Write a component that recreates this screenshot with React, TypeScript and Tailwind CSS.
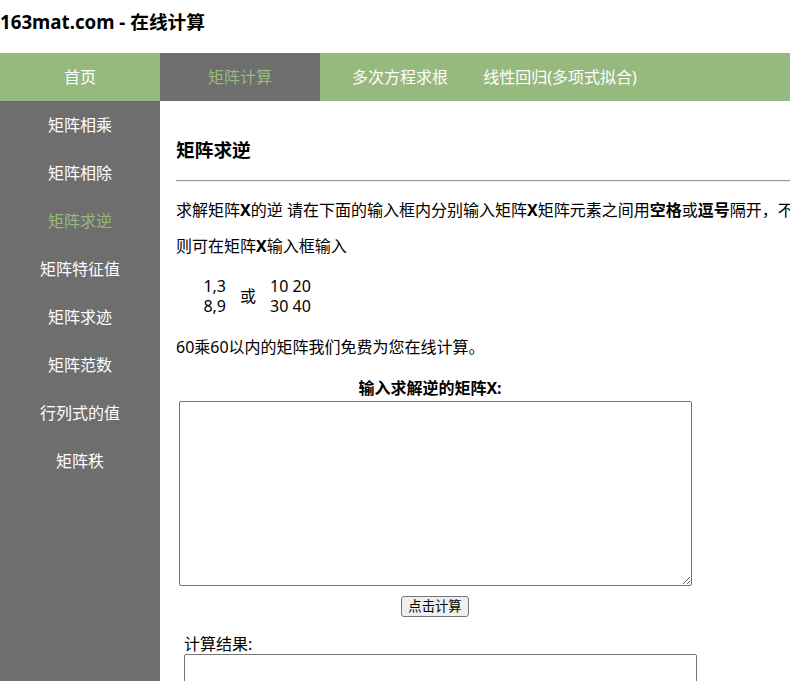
const topNav = [
  { label: '首页', active: false },
  { label: '矩阵计算', active: true },
  { label: '多次方程求根', active: false },
  { label: '线性回归(多项式拟合)', active: false },
];

const sideNav = [
  { label: '矩阵相乘', active: false },
  { label: '矩阵相除', active: false },
  { label: '矩阵求逆', active: true },
  { label: '矩阵特征值', active: false },
  { label: '矩阵求迹', active: false },
  { label: '矩阵范数', active: false },
  { label: '行列式的值', active: false },
  { label: '矩阵秩', active: false },
];

export default function App() {
  return (
    <div className="w-full h-[681px] overflow-hidden bg-white text-black font-['Noto_Sans','Noto_Sans_CJK_SC',sans-serif]">
      <div className="w-[1000px]">
        {/* Header */}
        <div className="h-[53px] pt-[10px]">
          <h1 className="text-[18.72px] font-bold leading-6">163mat.com - 在线计算</h1>
        </div>

        {/* Top nav */}
        <nav className="flex h-12 bg-[#96b97d]">
          {topNav.map((item) => (
            <a
              key={item.label}
              className={
                item.active
                  ? 'w-40 flex items-center justify-center bg-[#6e6e6e] text-[#96b97d] text-base'
                  : 'w-40 flex items-center justify-center text-white text-base whitespace-nowrap'
              }
            >
              {item.label}
            </a>
          ))}
        </nav>

        <div className="flex">
          {/* Sidebar */}
          <aside className="w-40 shrink-0 bg-[#6e6e6e] min-h-[600px]">
            {sideNav.map((item) => (
              <div
                key={item.label}
                className={
                  item.active
                    ? 'h-12 flex items-center justify-center text-base text-[#96b97d]'
                    : 'h-12 flex items-center justify-center text-base text-white'
                }
              >
                {item.label}
              </div>
            ))}
          </aside>

          {/* Content */}
          <main className="flex-1 pl-4 pt-9">
            <h3 className="text-[18.72px] font-bold leading-[26px]">矩阵求逆</h3>
            <hr className="mt-[17px] border-0 border-t border-t-[#9a9a9a] border-b border-b-[#eeeeee]" />

            <p className="mt-4 text-base leading-6 whitespace-nowrap">
              求解矩阵<b>X</b>的逆 请在下面的输入框内分别输入矩阵<b>X</b>矩阵元素之间用<b>空格</b>或<b>逗号</b>隔开，不同行之间用换行隔开。例如矩阵
            </p>
            <p className="mt-3 text-base leading-6">
              则可在矩阵<b>X</b>输入框输入
            </p>

            <div className="mt-[18px] flex text-base leading-5">
              <div className="ml-6 w-[26px] text-right">
                <div>1,3</div>
                <div>8,9</div>
              </div>
              <div className="ml-[14px] self-center">或</div>
              <div className="ml-[14px]">
                <div>10 20</div>
                <div>30 40</div>
              </div>
            </div>

            <p className="mt-[19px] text-base leading-6">60乘60以内的矩阵我们免费为您在线计算。</p>

            <div className="mt-[17px] w-[508px] text-center text-base font-bold leading-6">输入求解逆的矩阵X:</div>
            <textarea className="mt-px ml-[3px] block w-[513px] h-[185px] border border-[#767676] rounded-[2px] resize-y" />

            <div className="mt-[10px] w-[518px] flex justify-center">
              <button className="h-[21px] px-[6px] text-[13.33px] leading-[17px] bg-[#efefef] border border-[#767676] rounded-[3px]">
                点击计算
              </button>
            </div>

            <div className="mt-[17px] ml-2 text-base leading-5">计算结果:</div>
            <textarea className="ml-2 block w-[513px] h-[120px] border border-[#767676] rounded-[2px]" />
          </main>
        </div>
      </div>
    </div>
  );
}
